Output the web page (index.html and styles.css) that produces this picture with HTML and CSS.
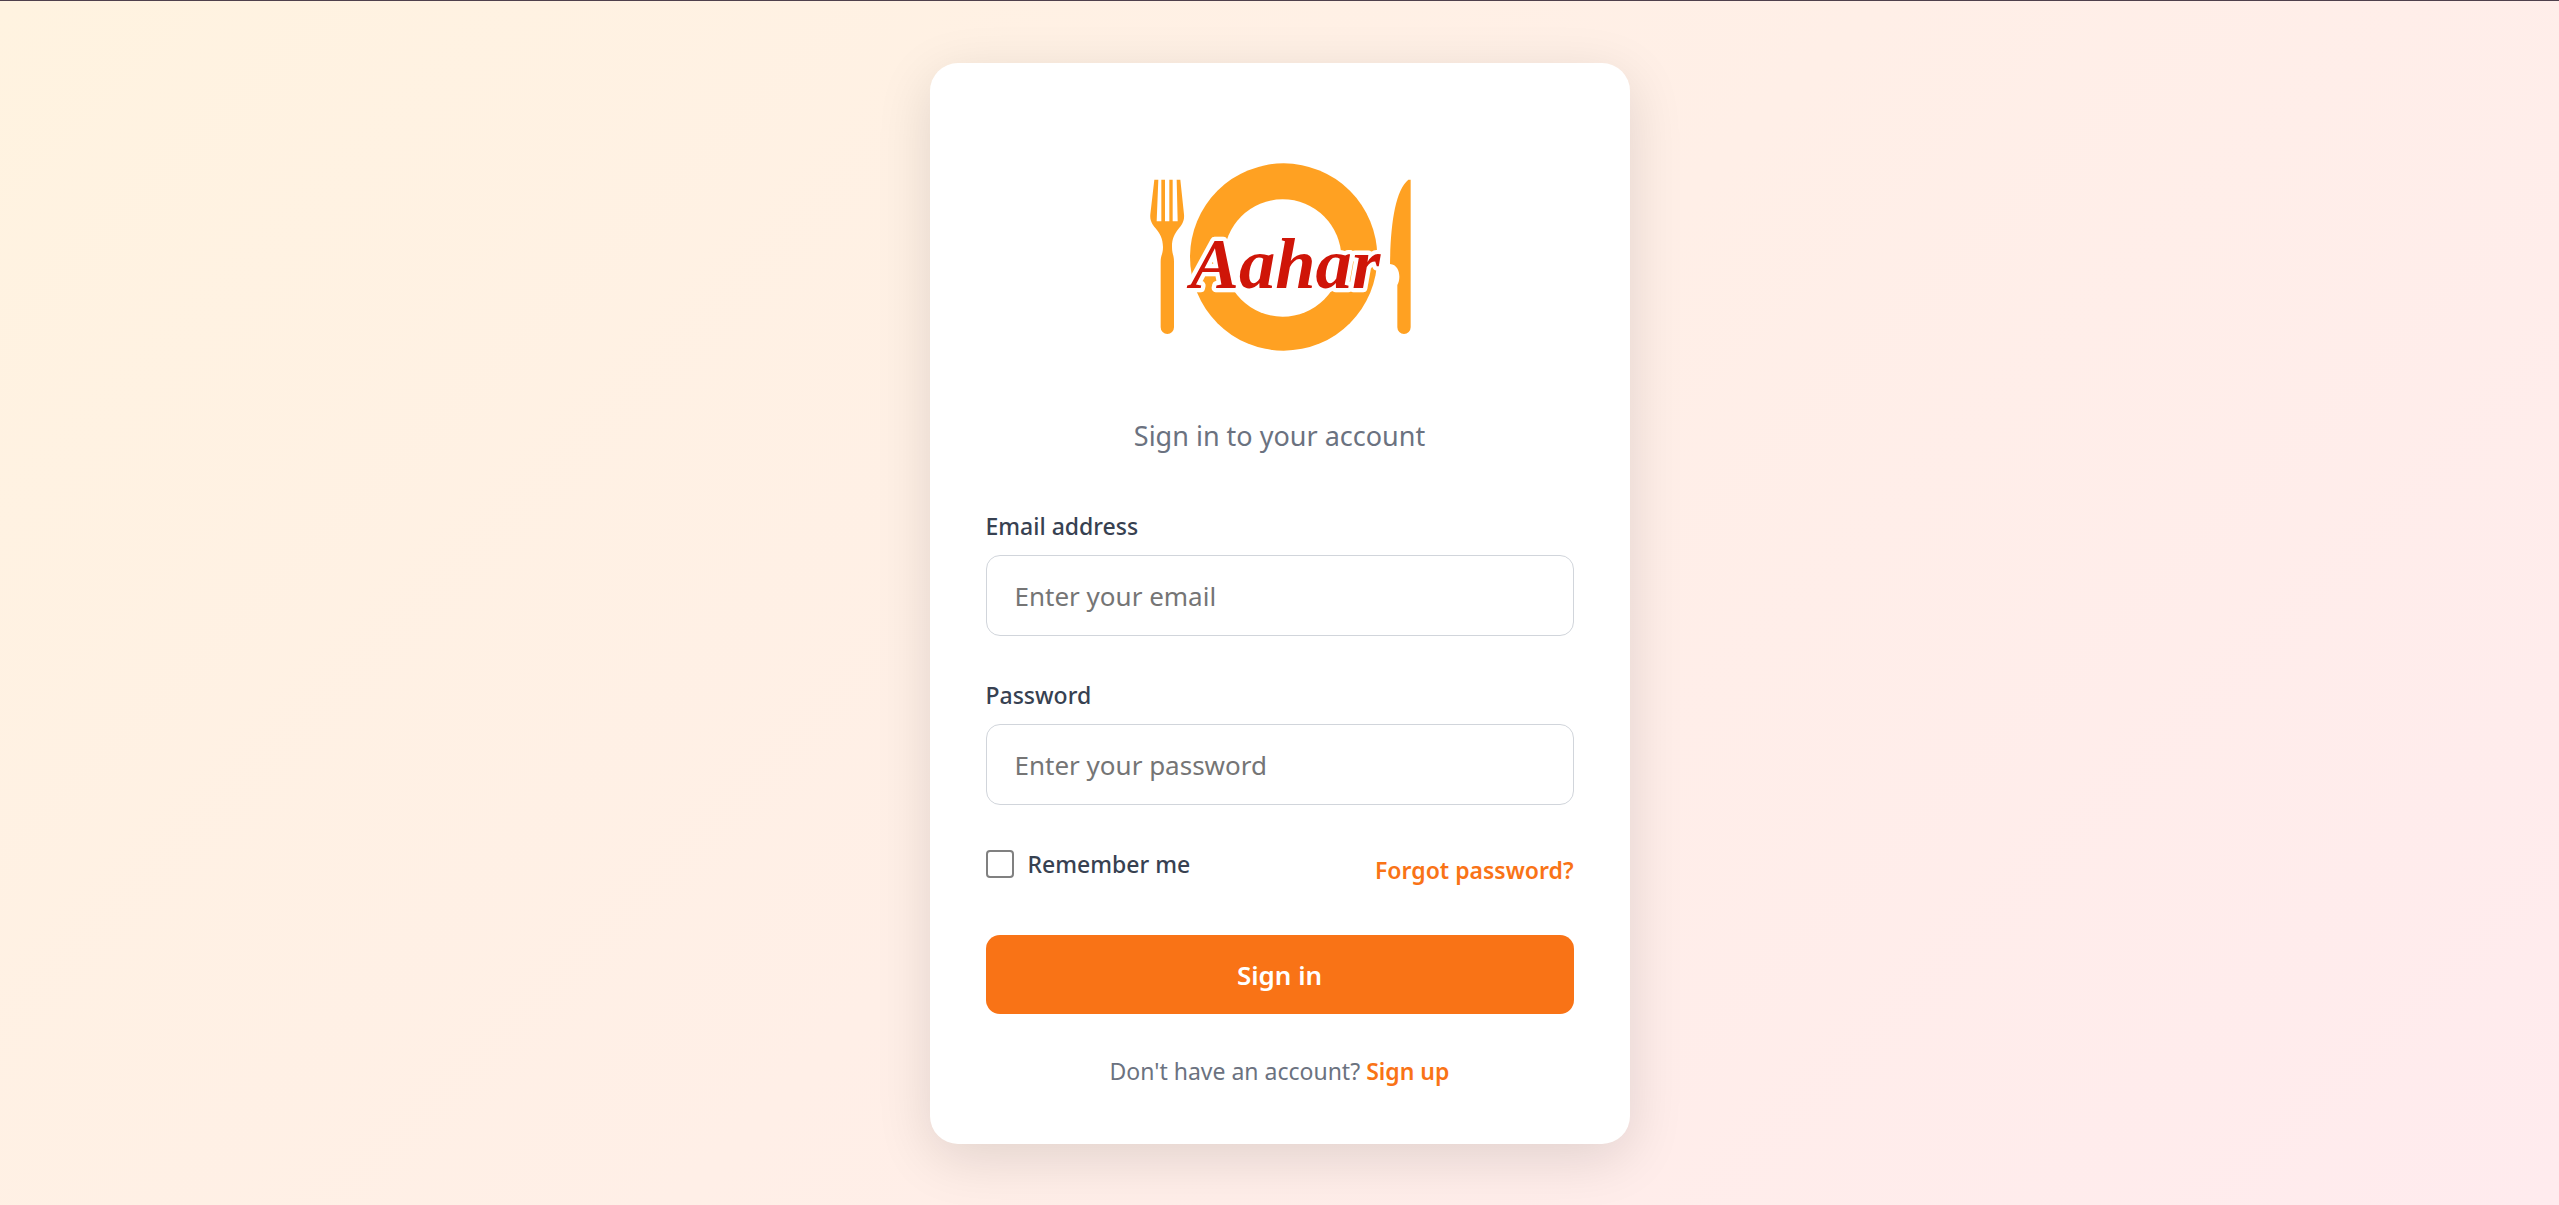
FILE: index.html
```html
<!DOCTYPE html>
<html lang="en">
<head>
<meta charset="utf-8">
<meta name="viewport" content="width=device-width, initial-scale=1">
<title>Aahar - Sign in</title>
<link rel="stylesheet" href="styles.css">
</head>
<body>
<main class="card">
  <header class="card-header">
    <svg class="logo" viewBox="0 0 900 690" role="img" aria-label="Aahar">
      <g fill="#ffa122">
        <path d="M73 116H85L80 241H94V116H105V241H118V116H128V241H143L140 116H151L162 220C166 262 126 262 126 318C126 340 132 342 132 362V559A20 20 0 0 1 92 559V362C92 342 99 340 99 318C99 262 57 262 61 220Z"/>
        <circle cx="461" cy="348" r="281"/>
        <path d="M842 116V559A20 20 0 0 1 802 559V432C813 415 811 371 780 369C782 250 795 150 835 116Z"/>
      </g>
      <circle cx="458" cy="351" r="176" fill="#fff"/>
      <text class="wordmark" x="466" y="440" text-anchor="middle">Aahar</text>
    </svg>
    <p class="subtitle">Sign in to your account</p>
  </header>
  <form class="form">
    <div class="field">
      <label class="label" for="email">Email address</label>
      <input class="input" id="email" type="email" placeholder="Enter your email">
    </div>
    <div class="field">
      <label class="label" for="password">Password</label>
      <input class="input" id="password" type="password" placeholder="Enter your password">
    </div>
    <div class="options">
      <label class="label remember" for="remember"><input class="checkbox" id="remember" type="checkbox">Remember me</label>
      <a class="link" href="#forgot">Forgot password?</a>
    </div>
    <button class="submit" type="submit">Sign in</button>
  </form>
  <p class="signup">Don't have an account? <a class="link" href="#signup">Sign up</a></p>
</main>
</body>
</html>
```
FILE: styles.css
```css
* {
  box-sizing: border-box;
}

body {
  margin: 0;
  min-height: 100vh;
  display: flex;
  align-items: center;
  justify-content: center;
  border-top: 1px solid #4f404c;
  background: linear-gradient(135deg, #fff3e0 0%, #ffebee 100%);
  font-family: "Segoe UI", "Noto Sans", sans-serif;
  font-size: 23px;
  line-height: 34px;
  color: #6b7280;
}

p {
  margin: 0;
}

.card {
  width: 100%;
  max-width: 700px;
  padding: 56px;
  border-radius: 28px;
  background: #fff;
  box-shadow: 0 14px 56px rgba(0, 0, 0, 0.12);
}

.card-header {
  display: flex;
  flex-direction: column;
  align-items: center;
  gap: 46px;
  margin-bottom: 54px;
  padding-top: 22px;
}

.logo {
  display: block;
  width: 300px;
  height: auto;
}

.wordmark {
  font-family: "Liberation Serif", serif;
  font-size: 218px;
  font-weight: 700;
  font-style: italic;
  fill: #cf1508;
  stroke: #fff;
  stroke-width: 26px;
  stroke-linejoin: round;
  paint-order: stroke;
}

.subtitle {
  font-size: 27px;
  line-height: 38px;
}

.form {
  display: flex;
  flex-direction: column;
  gap: 42px;
}

.field {
  display: flex;
  flex-direction: column;
  gap: 12px;
}

.label {
  color: #374151;
  font-weight: 500;
}

.input {
  width: 100%;
  height: 81px;
  padding: 2px 28px 0;
  border: 1px solid #d1d5db;
  border-radius: 14px;
  background: #fff;
  font: inherit;
  font-size: 26px;
}

.input::placeholder {
  color: #757575;
}

.options {
  display: flex;
  align-items: center;
  justify-content: space-between;
}

.remember {
  display: flex;
  align-items: center;
  gap: 14px;
  margin-bottom: 12px;
}

.checkbox {
  appearance: none;
  width: 28px;
  height: 28px;
  margin: 0;
  border: 2px solid #808080;
  border-radius: 4px;
  background: #fff;
}

.checkbox:checked {
  border-color: #f97316;
  background: #f97316;
}

.link {
  color: #f97316;
  font-weight: 600;
  text-decoration: none;
}

.submit {
  height: 79px;
  padding: 2px 0 0;
  border: 0;
  border-radius: 14px;
  background: #f97316;
  color: #fff;
  font: inherit;
  font-size: 26px;
  font-weight: 600;
}

.signup {
  margin-top: 40px;
  text-align: center;
}
```
